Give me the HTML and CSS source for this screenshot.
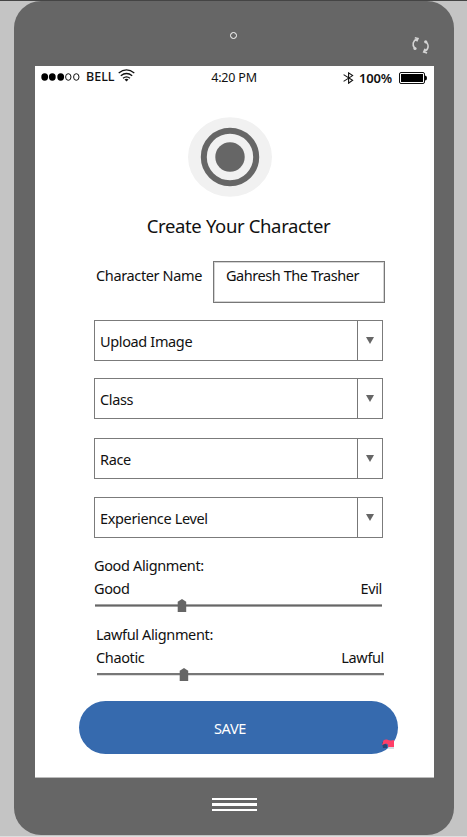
FILE: index.html
```html
<!DOCTYPE html>
<html lang="en">
<head>
<meta charset="utf-8">
<title>Create Your Character</title>
<link rel="stylesheet" href="styles.css">
</head>
<body>
<main class="phone">
  <header class="bezel-top">
    <span class="camera"></span>
    <svg class="rotate" width="20" height="20" viewBox="0 0 20 20" fill="none" stroke="#d4d4d4" stroke-width="1.6">
      <path d="M3.8 12.6C.6 8.7 2 4.5 6.4 2.8M3.8 1.7l3.2.8-1.3 2.8M14.8 5.5c3.7 3.7 2.7 8.5-1.7 10.1M16.1 17l-3.4-1.1 1.4-3.2"/>
      <circle cx="4" cy="12.5" r="1.6" fill="#d4d4d4" stroke="none"/>
      <circle cx="14.7" cy="5.8" r="1.6" fill="#d4d4d4" stroke="none"/>
    </svg>
  </header>
  <section class="screen">
    <div class="status">
      <div class="carrier">
        <svg width="39" height="8" viewBox="0 0 39 8">
          <ellipse cx="3.7" cy="4" rx="3.4" ry="3.7"/><ellipse cx="11.3" cy="4" rx="3.4" ry="3.7"/><ellipse cx="19.7" cy="4" rx="3.4" ry="3.7"/>
          <g fill="none" stroke="#111"><ellipse cx="27.3" cy="4" rx="2.7" ry="3.3"/><ellipse cx="35.3" cy="4" rx="2.7" ry="3.3"/></g>
        </svg>
        <span class="bell">BELL</span>
        <svg class="wifi" width="17" height="13" viewBox="0 0 17 13" fill="none" stroke="#111" stroke-width="1.3">
          <path d="M.7 4.1q7.8-6.4 15.6 0M2.8 6.8q5.7-4.6 11.4 0M5 9.2q3.5-2.8 7 0"/>
          <path d="M6.5 10.6q2-1.5 4 0l-2 2z" fill="#111" stroke="none"/>
        </svg>
      </div>
      <span class="time">4:20 PM</span>
      <div class="power">
        <svg width="11" height="12" viewBox="0 0 11 12" fill="none" stroke="#111" stroke-width="1.1"><path d="M.6 2.6l9 5.6-4 3V.9l4 2.7-9 5.8"/></svg>
        <span class="percent">100%</span>
        <svg class="battery" width="28" height="12" viewBox="0 0 28 12"><rect x=".5" y=".5" width="25" height="11" rx="1.5" fill="#fff" stroke="#111"/><path d="M2 2h22v8H2zM26 3.5q2 0 2 2.5t-2 2.5z"/></svg>
      </div>
    </div>
    <svg class="avatar" width="84" height="80" viewBox="0 0 84 80">
      <ellipse cx="42" cy="40" rx="42" ry="39.7" fill="#f1f1f1"/>
      <circle cx="42" cy="40" r="26.2" fill="none" stroke="#666" stroke-width="6"/>
      <circle cx="42" cy="40" r="14.7" fill="#666"/>
    </svg>
    <h1 class="title">Create Your Character</h1>
    <form class="form">
      <div class="name-row">
        <span class="name-label">Character Name</span>
        <div class="name-box"><span class="name-value">Gahresh The Trasher</span></div>
      </div>
      <div class="selects">
        <div class="select"><span class="select-text">Upload Image</span><span class="toggle"><i class="arrow"></i></span></div>
        <div class="select"><span class="select-text">Class</span><span class="toggle"><i class="arrow"></i></span></div>
        <div class="select race"><span class="select-text">Race</span><span class="toggle"><i class="arrow"></i></span></div>
        <div class="select"><span class="select-text">Experience Level</span><span class="toggle"><i class="arrow"></i></span></div>
      </div>
      <div class="slider">
        <div class="heading"><span>Good Alignment:</span></div>
        <div class="ends"><span>Good</span><span>Evil</span></div>
        <svg class="track" width="289" height="13" viewBox="0 0 289 13"><path d="M1 5h287v3H1z" fill="#a0a0a0"/><path d="M1 6h287v1H1z" fill="#666"/><path d="M83.7 2.8L88 0l4.2 2.8V13h-8.5z" fill="#666"/></svg>
      </div>
      <div class="slider lawful">
        <div class="heading"><span>Lawful Alignment:</span></div>
        <div class="ends"><span>Chaotic</span><span>Lawful</span></div>
        <svg class="track" width="289" height="13" viewBox="0 0 289 13"><path d="M1 5h287v2.3H1z" fill="#777"/><path d="M83.7 2.8L88 0l4.2 2.8V13h-8.5z" fill="#666"/></svg>
      </div>
    </form>
    <div class="save">
      <span>SAVE</span>
      <svg class="flag" width="13" height="11" viewBox="0 0 13 11"><path d="M7 5h5v5H6z" fill="#d8dde3"/><path d="M0 3l5 3v3H1z" fill="#284774"/><path d="M1 3Q1 0 5 .5q3 1.5 7 .5v7H6q1-3-2-3.5L0 6z" fill="#ff3e68"/></svg>
    </div>
  </section>
  <footer class="bezel-bottom"><i class="bar"></i><i class="bar"></i><i class="bar"></i></footer>
</main>
</body>
</html>
```

FILE: styles.css
```css
* { box-sizing: border-box; }
body {
  margin: 0;
  height: 837px;
  padding: 1px 13px 2px 14px;
  overflow: hidden;
  background: #c4c4c4;
  border-bottom: 1px solid #dedede;
  box-shadow: inset 0 1px #444;
  font-family: "Noto Sans", "Open Sans", sans-serif;
  font-size: 14.5px;
  letter-spacing: -0.36px;
  line-height: 20px;
  color: #111;
}
svg { display: block; flex: none; }
span { white-space: nowrap; }
.phone {
  height: 834px;
  background: #666;
  border-radius: 27px;
  padding: 0 20px 0 21px;
}
.bezel-top {
  height: 65px;
  position: relative;
  display: flex;
  justify-content: center;
  padding: 31px 2px 0 0;
}
.camera {
  width: 7px;
  height: 7px;
  border: 1px solid #fff;
  border-radius: 50%;
}
.rotate { position: absolute; left: 376px; top: 35px; }
.screen {
  height: 712px;
  width: 399px;
  background: #fff;
  border-bottom: 1px solid #bbb;
  display: flex;
  flex-direction: column;
}
.status {
  height: 20px;
  padding: 0 7px 0 6px;
  display: grid;
  grid-template-columns: 1fr auto 1fr;
  align-items: center;
  font-size: 12.5px;
}
.carrier, .power { display: flex; align-items: center; }
.power { justify-content: flex-end; padding-top: 1px; }
.time { padding-top: 2px; letter-spacing: -0.2px; }
.bell { margin-left: 6px; width: 30px; font-weight: 500; letter-spacing: 0; }
.wifi { margin-left: 2px; margin-top: -3px; }
.percent { margin: 0 6px 0 5px; width: 34px; font-size: 13px; font-weight: 600; letter-spacing: -0.2px; }
.avatar { margin: 31px 0 0 153px; }
.title {
  margin: 15px 0 0;
  padding-left: 8px;
  height: 28px;
  line-height: 28px;
  text-align: center;
  font-size: 18.5px;
  font-weight: 400;
  letter-spacing: -0.36px;
}
.form { padding: 21px 49px 0 59px; }
.name-row { display: flex; justify-content: space-between; padding-left: 2px; }
.name-label { padding-top: 4px; }
.name-box {
  width: 172px;
  height: 42px;
  border: 1px solid #777;
  box-shadow: inset 0 0 0 1px #d4d4d4;
  padding: 3px 12px;
}
.name-value { letter-spacing: -0.44px; }
.selects { margin-top: 17px; width: 289px; display: grid; gap: 17px; }
.select {
  height: 41px;
  display: flex;
  align-items: center;
  border: 1px solid #7b7b7b;
  padding-left: 5px;
}
.race { margin: 2px 0 1px; }
.toggle {
  margin-left: auto;
  width: 25px;
  align-self: stretch;
  border-left: 1px solid #777;
  display: flex;
  justify-content: center;
  padding-top: 16px;
}
.arrow {
  width: 0;
  height: 0;
  border: 4.5px solid transparent;
  border-top: 7px solid #666;
  border-bottom: 0;
}
.slider { margin-top: 17px; width: 289px; }
.slider.lawful { margin: 12px 0 0 2px; }
.heading, .ends { height: 23px; display: flex; justify-content: space-between; }
.ends { padding-right: 1px; }
.track { margin-top: -2px; }
.save {
  position: relative;
  margin: 20px 0 0 44px;
  width: 319px;
  height: 53px;
  border-radius: 27px;
  background: #366aae;
  color: #fff;
  display: flex;
  align-items: center;
  justify-content: center;
  padding-right: 17px;
  font-size: 14.5px;
}
.flag { position: absolute; right: 3px; bottom: 4px; }
.bezel-bottom { display: grid; justify-items: center; gap: 3px; padding: 20px 1px 0 0; }
.bar { width: 45px; height: 2.3px; background: #fff; }
```
